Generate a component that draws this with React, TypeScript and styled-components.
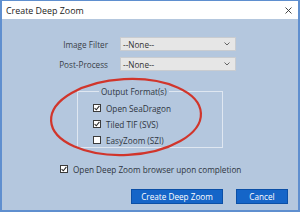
import React from 'react'
import styled, { createGlobalStyle } from 'styled-components'

const GlobalStyle = createGlobalStyle`
  html, body {
    margin: 0;
    padding: 0;
    width: 300px;
    height: 212px;
    overflow: hidden;
    font-family: 'Open Sans', 'Noto Sans', sans-serif;
  }
  * {
    box-sizing: border-box;
  }
`

const Window = styled.div`
  position: relative;
  width: 300px;
  height: 212px;
  display: flex;
  flex-direction: column;
  border: 2px solid #5f8fcf;
  border-top-width: 1px;
  background: #b4c7de;
`

const TitleBar = styled.div`
  height: 18px;
  flex: none;
  background: #ffffff;
  display: flex;
  align-items: center;
  justify-content: space-between;
  padding: 0 6px 0 4px;
`

const TitleText = styled.span`
  font-size: 8.9px;
  color: #222;
`

const Body = styled.div`
  flex: 1;
  display: flex;
  flex-direction: column;
  padding-top: 18px;
`

const FormGrid = styled.div`
  display: grid;
  grid-template-columns: 106px 116px;
  column-gap: 12px;
  row-gap: 6px;
  align-items: center;
`

const Label = styled.span`
  text-align: right;
  font-size: 8.2px;
  color: #3a3f48;
`

const Select = styled.div`
  height: 14px;
  background: #e6e6e6;
  border: 1px solid #c9ccd0;
  display: flex;
  align-items: center;
  justify-content: space-between;
  padding: 0 5px 0 2px;
  font-size: 8.2px;
  color: #333;
`

const Group = styled.fieldset`
  margin: 15px 0 0 75px;
  width: 146px;
  height: 62px;
  padding: 3px 0 0 15px;
  border: 1px solid #dfe7f1;
  display: flex;
  flex-direction: column;
`

const Legend = styled.legend`
  margin-left: 6px;
  padding: 0 2px;
  font-size: 8.2px;
  color: #2f3540;
`

const CheckRow = styled.label<{ indent?: number }>`
  height: 16px;
  display: flex;
  align-items: center;
  gap: 5px;
  margin-left: ${({ indent }) => (indent ? `${indent}px` : '0')};
  font-size: 8.2px;
  color: #2f3540;
`

const Box = styled.span`
  width: 8px;
  height: 8px;
  flex: none;
  background: #ffffff;
  border: 1px solid #3b3b3b;
  display: flex;
  align-items: center;
  justify-content: center;
`

const Options = styled.div`
  margin-top: 13px;
`

const Buttons = styled.div`
  margin-top: 12px;
  display: flex;
  justify-content: flex-end;
  gap: 13px;
  padding-right: 10px;
`

const Button = styled.div<{ w: number }>`
  width: ${({ w }) => w}px;
  height: 15px;
  background: #1565c8;
  border: 1px solid #0b4fa6;
  color: #ffffff;
  font-size: 8.2px;
  display: flex;
  align-items: center;
  justify-content: center;
`

const Ellipse = styled.svg`
  position: absolute;
  left: -2px;
  top: -1px;
  pointer-events: none;
`

const Check = () => (
  <svg width="6" height="6" viewBox="0 0 6 6">
    <path d="M0.6 3.1 L2.3 4.8 L5.4 0.9" fill="none" stroke="#2b2b2b" strokeWidth="1.1" />
  </svg>
)

const CheckBox = ({ checked }: { checked: boolean }) => <Box>{checked && <Check />}</Box>

const Chevron = () => (
  <svg width="6" height="4" viewBox="0 0 6 4">
    <path d="M0.5 0.5 L3 3 L5.5 0.5" fill="none" stroke="#555" strokeWidth="0.9" />
  </svg>
)

export default function App() {
  return (
    <>
      <GlobalStyle />
      <Window>
        <TitleBar>
          <TitleText>Create Deep Zoom</TitleText>
          <svg width="7" height="7" viewBox="0 0 7 7">
            <path d="M0.5 0.5 L6.5 6.5 M6.5 0.5 L0.5 6.5" stroke="#333" strokeWidth="0.9" />
          </svg>
        </TitleBar>
        <Body>
          <FormGrid>
            <Label>Image Filter</Label>
            <Select>
              --None--
              <Chevron />
            </Select>
            <Label>Post-Process</Label>
            <Select>
              --None--
              <Chevron />
            </Select>
          </FormGrid>
          <Group>
            <Legend>Output Format(s)</Legend>
            <CheckRow>
              <CheckBox checked />
              Open SeaDragon
            </CheckRow>
            <CheckRow>
              <CheckBox checked />
              Tiled TIF (SVS)
            </CheckRow>
            <CheckRow>
              <CheckBox checked={false} />
              EasyZoom (SZI)
            </CheckRow>
          </Group>
          <Options>
            <CheckRow indent={58}>
              <CheckBox checked />
              Open Deep Zoom browser upon completion
            </CheckRow>
          </Options>
          <Buttons>
            <Button w={92}>Create Deep Zoom</Button>
            <Button w={52}>Cancel</Button>
          </Buttons>
        </Body>
        <Ellipse width="300" height="212" viewBox="0 0 300 212">
          <ellipse
            cx="126"
            cy="117"
            rx="75"
            ry="38"
            transform="rotate(-3 126 117)"
            fill="none"
            stroke="#d1352b"
            strokeWidth="2.2"
          />
        </Ellipse>
      </Window>
    </>
  )
}
